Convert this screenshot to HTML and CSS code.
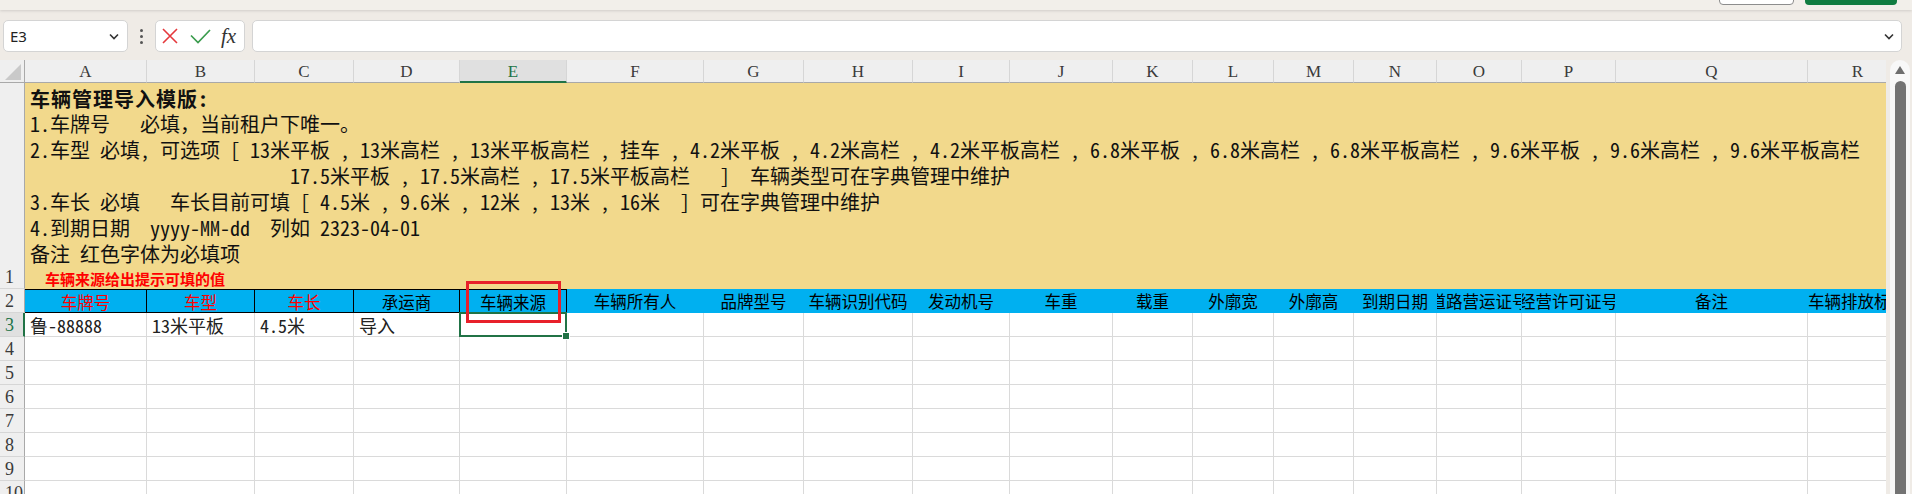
FILE: index.html
```html
<!DOCTYPE html>
<html lang="zh-CN">
<head>
<meta charset="utf-8">
<title>车辆管理导入模版</title>
<link rel="stylesheet" href="styles.css">
</head>
<body>
<div class="app">
  <header class="topstrip">
    <span class="btn btn-light"></span>
    <span class="btn btn-green"></span>
  </header>

  <div class="formula-row">
    <div class="namebox">
      <span class="ref">E3</span>
      <svg width="10" height="7" viewBox="0 0 10 7"><path d="M1 1.5l4 4 4-4" fill="none" stroke="#333" stroke-width="1.6"/></svg>
    </div>
    <div class="dots"><i></i><i></i><i></i></div>
    <div class="fxbox">
      <svg class="ic-x" width="16" height="16" viewBox="0 0 16 16"><path d="M1 1L15 15M15 1L1 15" stroke="#e5393d" stroke-width="1.6"/></svg>
      <svg class="ic-ok" width="21" height="15" viewBox="0 0 21 15"><path d="M1 6.5L8 13.5L20 1" fill="none" stroke="#3b9c4e" stroke-width="1.7"/></svg>
      <span class="fx">fx</span>
    </div>
    <div class="finput">
      <svg width="10" height="7" viewBox="0 0 10 7"><path d="M1 1.5l4 4 4-4" fill="none" stroke="#333" stroke-width="1.6"/></svg>
    </div>
  </div>

  <div class="sheet">
    <div class="viewport">
      <div class="grid">
        <!-- column headers -->
        <div class="corner"><svg width="16" height="16" viewBox="0 0 16 16"><path d="M16 0V16H0Z" fill="#c9c9c9"/></svg></div>
        <div class="ch">A</div><div class="ch">B</div><div class="ch">C</div><div class="ch">D</div>
        <div class="ch sel">E</div><div class="ch">F</div><div class="ch">G</div><div class="ch">H</div>
        <div class="ch">I</div><div class="ch">J</div><div class="ch">K</div><div class="ch">L</div>
        <div class="ch">M</div><div class="ch">N</div><div class="ch">O</div><div class="ch">P</div>
        <div class="ch">Q</div><div class="ch">R</div>

        <!-- row 1 -->
        <div class="rh">1</div>
        <div class="doc">
          <p class="title">车辆管理导入模版:</p>
          <p>1.车牌号   必填，当前租户下唯一。</p>
          <p>2.车型 必填, 可选项 [ 13米平板 , 13米高栏 , 13米平板高栏 , 挂车 , 4.2米平板 , 4.2米高栏 , 4.2米平板高栏 , 6.8米平板 , 6.8米高栏 , 6.8米平板高栏 , 9.6米平板 , 9.6米高栏 , 9.6米平板高栏</p>
          <p>                          17.5米平板 , 17.5米高栏 , 17.5米平板高栏   ]  车辆类型可在字典管理中维护</p>
          <p>3.车长 必填   车长目前可填 [ 4.5米 , 9.6米 , 12米 , 13米 , 16米  ] 可在字典管理中维护</p>
          <p>4.到期日期  yyyy-MM-dd  列如 2323-04-01</p>
          <p>备注 红色字体为必填项</p>
          <p class="note">车辆来源给出提示可填的值</p>
        </div>

        <!-- row 2 -->
        <div class="rh">2</div>
        <div class="hc bd red">车牌号</div>
        <div class="hc bd red">车型</div>
        <div class="hc bd red">车长</div>
        <div class="hc bd">承运商</div>
        <div class="hc bd src">车辆来源</div>
        <div class="hc">车辆所有人</div>
        <div class="hc">品牌型号</div>
        <div class="hc">车辆识别代码</div>
        <div class="hc">发动机号</div>
        <div class="hc">车重</div>
        <div class="hc">载重</div>
        <div class="hc">外廓宽</div>
        <div class="hc">外廓高</div>
        <div class="hc">到期日期</div>
        <div class="hc">道路营运证号</div>
        <div class="hc">经营许可证号</div>
        <div class="hc">备注</div>
        <div class="hc">车辆排放标准</div>

        <!-- row 3 -->
        <div class="rh sel">3</div>
        <div class="c">鲁-88888</div>
        <div class="c">13米平板</div>
        <div class="c">4.5米</div>
        <div class="c">导入</div>
        <div class="c cur"></div>
        <div class="c"></div><div class="c"></div><div class="c"></div><div class="c"></div>
        <div class="c"></div><div class="c"></div><div class="c"></div><div class="c"></div>
        <div class="c"></div><div class="c"></div><div class="c"></div><div class="c"></div>
        <div class="c"></div>

        <!-- row 4 -->
        <div class="rh">4</div>
        <div class="c"></div><div class="c"></div><div class="c"></div><div class="c"></div><div class="c"></div><div class="c"></div>
        <div class="c"></div><div class="c"></div><div class="c"></div><div class="c"></div><div class="c"></div><div class="c"></div>
        <div class="c"></div><div class="c"></div><div class="c"></div><div class="c"></div><div class="c"></div><div class="c"></div>
        <!-- row 5 -->
        <div class="rh">5</div>
        <div class="c"></div><div class="c"></div><div class="c"></div><div class="c"></div><div class="c"></div><div class="c"></div>
        <div class="c"></div><div class="c"></div><div class="c"></div><div class="c"></div><div class="c"></div><div class="c"></div>
        <div class="c"></div><div class="c"></div><div class="c"></div><div class="c"></div><div class="c"></div><div class="c"></div>
        <!-- row 6 -->
        <div class="rh">6</div>
        <div class="c"></div><div class="c"></div><div class="c"></div><div class="c"></div><div class="c"></div><div class="c"></div>
        <div class="c"></div><div class="c"></div><div class="c"></div><div class="c"></div><div class="c"></div><div class="c"></div>
        <div class="c"></div><div class="c"></div><div class="c"></div><div class="c"></div><div class="c"></div><div class="c"></div>
        <!-- row 7 -->
        <div class="rh">7</div>
        <div class="c"></div><div class="c"></div><div class="c"></div><div class="c"></div><div class="c"></div><div class="c"></div>
        <div class="c"></div><div class="c"></div><div class="c"></div><div class="c"></div><div class="c"></div><div class="c"></div>
        <div class="c"></div><div class="c"></div><div class="c"></div><div class="c"></div><div class="c"></div><div class="c"></div>
        <!-- row 8 -->
        <div class="rh">8</div>
        <div class="c"></div><div class="c"></div><div class="c"></div><div class="c"></div><div class="c"></div><div class="c"></div>
        <div class="c"></div><div class="c"></div><div class="c"></div><div class="c"></div><div class="c"></div><div class="c"></div>
        <div class="c"></div><div class="c"></div><div class="c"></div><div class="c"></div><div class="c"></div><div class="c"></div>
        <!-- row 9 -->
        <div class="rh">9</div>
        <div class="c"></div><div class="c"></div><div class="c"></div><div class="c"></div><div class="c"></div><div class="c"></div>
        <div class="c"></div><div class="c"></div><div class="c"></div><div class="c"></div><div class="c"></div><div class="c"></div>
        <div class="c"></div><div class="c"></div><div class="c"></div><div class="c"></div><div class="c"></div><div class="c"></div>
        <!-- row 10 -->
        <div class="rh">10</div>
        <div class="c"></div><div class="c"></div><div class="c"></div><div class="c"></div><div class="c"></div><div class="c"></div>
        <div class="c"></div><div class="c"></div><div class="c"></div><div class="c"></div><div class="c"></div><div class="c"></div>
        <div class="c"></div><div class="c"></div><div class="c"></div><div class="c"></div><div class="c"></div><div class="c"></div>
      </div>
    </div>
    <div class="vscroll"><span class="up"></span><span class="thumb"></span></div>
  </div>
</div>
</body>
</html>
```

FILE: styles.css
```css
* { box-sizing: border-box; margin: 0; padding: 0; }

html, body { width: 1912px; height: 494px; overflow: hidden; }

body {
  background: #efebe6;
  font-family: "Noto Sans", "Noto Sans CJK SC", sans-serif;
  color: #222;
}

.app { --song: "Noto Sans Mono CJK SC", "Noto Sans CJK SC", monospace; }

/* top strip with partially visible buttons */
.topstrip {
  height: 10px;
  display: flex;
  justify-content: flex-end;
  align-items: flex-end;
  gap: 11px;
  padding-right: 15px;
  background: #f2efea;
  box-shadow: 0 1px 3px rgba(0, 0, 0, 0.13);
}
.btn { height: 20px; margin-bottom: 5px; border-radius: 4px; }
.btn-light { width: 75px; background: #fff; border: 1px solid #8d8d8d; }
.btn-green { width: 92px; background: #107c41; }

/* formula bar */
.formula-row {
  display: flex;
  align-items: stretch;
  height: 32px;
  margin-top: 10px;
  padding: 0 10px 0 3px;
}
.namebox {
  width: 125px;
  background: #fff;
  border: 1px solid #d4d4d4;
  border-radius: 5px;
  display: flex;
  align-items: center;
  justify-content: space-between;
  padding: 0 8px 0 6px;
  font-size: 15px;
  color: #222;
}
.dots {
  width: 27px;
  display: flex;
  flex-direction: column;
  align-items: center;
  justify-content: center;
  gap: 3px;
}
.dots i { width: 3px; height: 3px; background: #555; border-radius: 50%; }
.fxbox {
  width: 90px;
  background: #fff;
  border: 1px solid #d4d4d4;
  border-radius: 5px;
  display: flex;
  align-items: center;
  padding-left: 6px;
}
.ic-ok { margin-left: 12px; }
.fx {
  margin-left: 10px;
  font-family: "Liberation Serif", serif;
  font-style: italic;
  font-size: 21px;
  color: #333;
  line-height: 1;
}
.finput {
  flex: 1;
  margin-left: 7px;
  background: #fff;
  border: 1px solid #d4d4d4;
  border-radius: 5px;
  display: flex;
  align-items: center;
  justify-content: flex-end;
  padding-right: 7px;
}

/* sheet */
.sheet { display: flex; margin-top: 8px; height: 434px; }
.viewport { width: 1886px; overflow: hidden; background: #fff; }
.grid {
  display: grid;
  width: 1908px;
  grid-template-columns: 25px 122px 108px 99px 106px 107px 137px 100px 109px 97px 103px 80px 81px 80px 83px 85px 94px 192px 100px;
  grid-template-rows: 23px 206px repeat(9, 24px);
}

.corner {
  background: #efefef;
  border-right: 1px solid #a9a9a9;
  border-bottom: 1px solid #a9a9a9;
  display: flex;
  align-items: flex-end;
  justify-content: flex-end;
  padding: 0 3px 2px 0;
}
.ch {
  background: #efefef;
  border-right: 1px solid #d6d6d6;
  border-bottom: 1px solid #a9a9a9;
  display: flex;
  align-items: center;
  justify-content: center;
  font-family: "Liberation Serif", serif;
  font-size: 17px;
  color: #3a3a3a;
  padding-top: 2px;
}
.ch.sel { background: #e0e0e0; border-bottom: 2px solid #217346; color: #217346; }

.rh {
  background: #efefef;
  border-right: 1px solid #a9a9a9;
  border-bottom: 1px solid #d6d6d6;
  font-family: "Liberation Serif", serif;
  font-size: 18px;
  color: #3a3a3a;
  display: flex;
  align-items: flex-end;
  padding: 0 0 1px 5px;
  line-height: 20px;
  white-space: nowrap;
  overflow: hidden;
}
.rh.sel { background: #e0e0e0; color: #217346; border-right: 2px solid #217346; }

/* merged instruction cell */
.doc {
  grid-column: span 18;
  background: #f2d98c;
  padding: 2.5px 0 0 5px;
  font-family: var(--song);
  font-size: 20px;
  line-height: 25.9px;
  color: #111;
  overflow: hidden;
}
.doc p { white-space: pre; }
.doc .title { font-weight: 700; letter-spacing: 1px; }
.doc .note {
  font-family: "Noto Sans CJK SC", sans-serif;
  font-weight: 700;
  font-size: 15px;
  line-height: 20px;
  color: #ff0000;
  padding-left: 15px;
  margin-top: 2px;
}

/* header row 2 */
.hc {
  background: #00b0f0;
  border-right: 1px solid #00b0f0;
  border-bottom: 1px solid #00b0f0;
  display: flex;
  align-items: center;
  justify-content: center;
  white-space: nowrap;
  overflow: hidden;
  font-family: "Noto Sans CJK SC", sans-serif;
  font-size: 16.5px;
  color: #000;
  padding-top: 1px;
}
.hc.bd { border-top: 1px solid #000; border-right-color: #000; border-bottom-color: #000; }
.hc.red { color: #ff0000; }
.hc.src { position: relative; overflow: visible; }
.hc.src::after {
  content: "";
  position: absolute;
  left: 6px;
  right: 5px;
  top: -9px;
  bottom: -11px;
  border: 3px solid #e8202a;
  z-index: 3;
}

/* data cells */
.c {
  background: #fff;
  border-right: 1px solid #dadada;
  border-bottom: 1px solid #dadada;
  font-family: var(--song);
  font-size: 18px;
  line-height: 21px;
  color: #222;
  padding: 2px 0 0 5px;
  white-space: nowrap;
  overflow: hidden;
}
.c.cur { position: relative; overflow: visible; }
.c.cur::before {
  content: "";
  position: absolute;
  left: -1px;
  top: -1px;
  right: -1px;
  bottom: -1px;
  border: 2px solid #217346;
  z-index: 2;
}
.c.cur::after {
  content: "";
  position: absolute;
  right: -4px;
  bottom: -4px;
  width: 6px;
  height: 6px;
  background: #217346;
  border: 1px solid #fff;
  z-index: 2;
}

/* vertical scrollbar */
.vscroll {
  width: 20px;
  margin-left: 4px;
  background: #f8f8f8;
  border-radius: 10px 10px 0 0;
  display: flex;
  flex-direction: column;
  align-items: center;
  padding-top: 6px;
}
.vscroll .up {
  width: 0;
  height: 0;
  border-left: 5px solid transparent;
  border-right: 5px solid transparent;
  border-bottom: 8px solid #6e6e6e;
}
.vscroll .thumb {
  width: 11px;
  flex: 1;
  margin-top: 7px;
  background: #737373;
  border-radius: 6px 6px 0 0;
}
```
